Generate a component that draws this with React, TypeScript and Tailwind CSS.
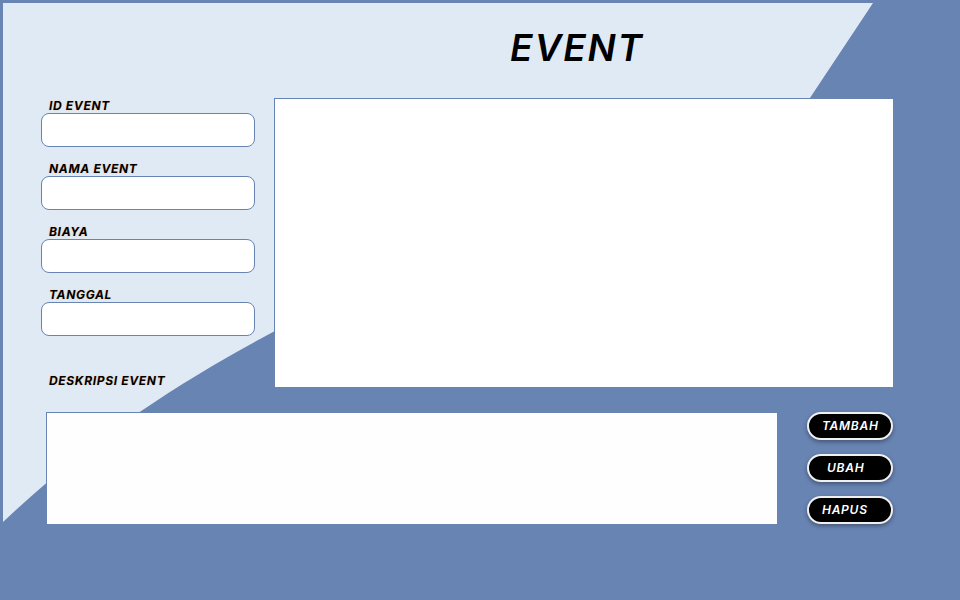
import React from 'react';

const fields = ['ID EVENT', 'NAMA EVENT', 'BIAYA', 'TANGGAL'];

const labelCls =
  "pl-2 h-[15px] text-[12px] leading-[15px] font-bold italic tracking-[0.055em] text-black [text-shadow:0_0_2px_#f3c9a5]";

const btnCls =
  "w-[86px] h-[28px] rounded-full bg-black border-2 border-[#f0f0f0] shadow-[0_2px_4px_rgba(0,0,0,0.35)] text-white text-[12px] font-semibold italic tracking-[0.06em] text-left";

const App: React.FC = () => {
  return (
    <div className="relative w-[960px] h-[600px] overflow-hidden bg-[#6884b3] font-['Inter',sans-serif]">
      {/* background shape */}
      <svg className="absolute inset-0 pointer-events-none" width="960" height="600" viewBox="0 0 960 600">
        <path
          d="M3 3 H873 L790 128 L290 323 C200 370 100 430 3 522 Z"
          fill="#e0eaf5"
        />
      </svg>

      <div className="relative flex flex-col">
        {/* Title */}
        <div className="h-[98px] pl-[510px] pt-[26px]">
          <h1 className="text-[37px] leading-[44px] font-semibold italic tracking-[0.05em] text-black">EVENT</h1>
        </div>

        {/* Form + table */}
        <div className="flex gap-[19px] pl-[41px]">
          <div className="w-[214px] flex flex-col">
            {fields.map((f) => (
              <div key={f} className="flex flex-col mb-[14px]">
                <div className={labelCls}>{f}</div>
                <input className="h-[34px] w-full rounded-[8px] border border-[#6884b3] bg-white outline-none" />
              </div>
            ))}
            <div className={`${labelCls} mt-[23px]`}>DESKRIPSI EVENT</div>
          </div>
          <div className="w-[619px] h-[289px] bg-white border-l border-t border-[#6884b3]" />
        </div>

        {/* Description + buttons */}
        <div className="flex gap-[30px] pl-[46px] mt-[24px]">
          <textarea className="w-[731px] h-[112px] bg-[#fefefe] border-l border-t border-[#6884b3] resize-none outline-none" />
          <div className="flex flex-col gap-[14px]">
            <button className={`${btnCls} pl-[13px]`}>TAMBAH</button>
            <button className={`${btnCls} pl-[18px]`}>UBAH</button>
            <button className={`${btnCls} pl-[13px]`}>HAPUS</button>
          </div>
        </div>
      </div>
    </div>
  );
};

export default App;
